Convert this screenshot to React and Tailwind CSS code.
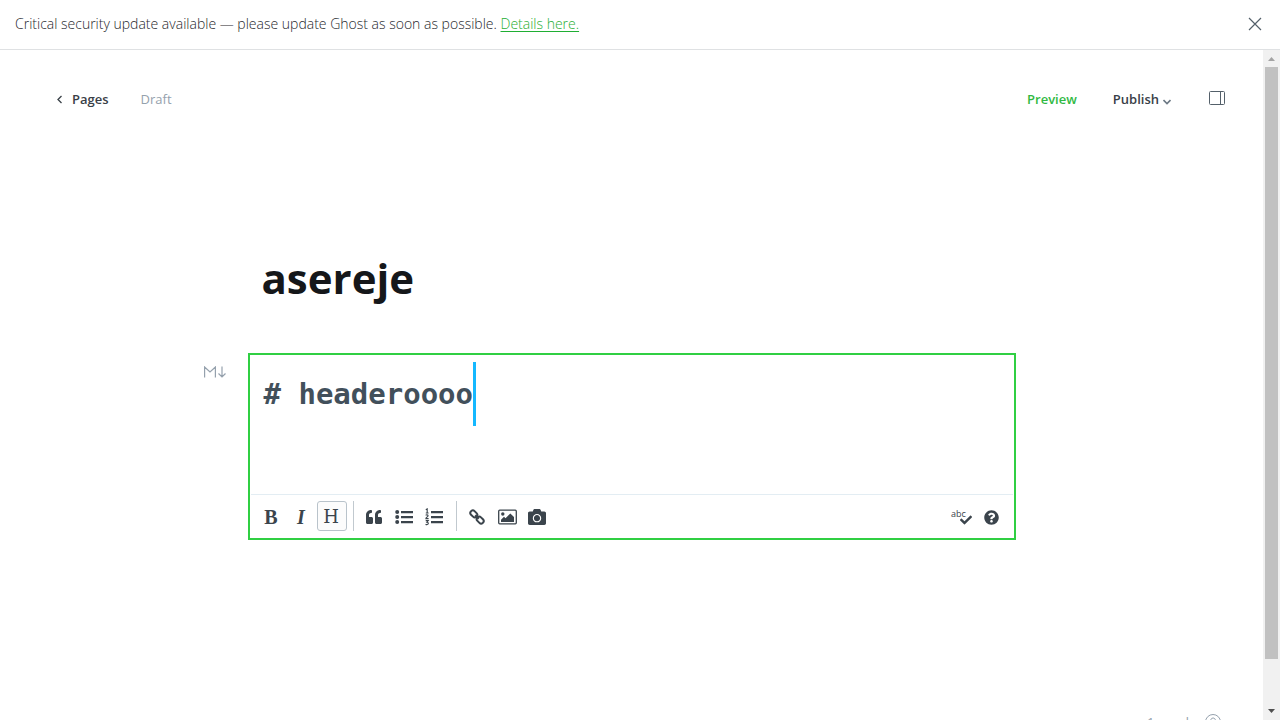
import { useState } from "react";
import { FaQuoteLeft, FaCamera, FaQuestionCircle, FaCheck } from "react-icons/fa";

function ToolButton({ label, active = false, children }) {
  return (
    <button
      type="button"
      aria-label={label}
      aria-pressed={active}
      className={
        "flex size-[30px] items-center justify-center rounded-[3px] border pt-0.5 pr-px text-[#3b444c] " +
        (active ? "border-[#b9c3cb] bg-[#fcfcfc]" : "border-transparent")
      }
    >
      {children}
    </button>
  );
}

function Divider() {
  return <span className="mx-1.5 h-[30px] w-px bg-[#c1c9cf]" />;
}

function ListIcon() {
  return (
    <svg viewBox="0 0 18 16" className="h-4 w-[18px]" fill="currentColor">
      <circle cx="2.2" cy="3" r="2" />
      <circle cx="2.2" cy="8" r="2" />
      <circle cx="2.2" cy="13" r="2" />
      <path d="M6 2h12v2.200H6zM6 7h12v2.200H6zM6 12h12v2.200H6z" />
    </svg>
  );
}

function NumberedListIcon() {
  return (
    <svg viewBox="0 0 18 18" className="size-[18px]" fill="currentColor">
      <path d="M6 3h12v2.200H6zM6 8h12v2.200H6zM6 13h12v2.200H6z" />
      <path
        d="M.8 1.800 2.200.9v4M.8 5h2.800M.7 7.300c.7-.8 2.400-.6 2.400.5C3.100 8.700 1 9.200.9 10.600h2.700M.7 12.600h2.500l-1.300 1.600c1 0 1.500.5 1.400 1.300-.1 1.200-1.800 1.400-2.700.7"
        fill="none"
        stroke="currentColor"
        strokeWidth="1.100"
      />
    </svg>
  );
}

function LinkIcon() {
  return (
    <svg viewBox="0 0 16 16" className="size-4" fill="none" stroke="currentColor" strokeWidth="2">
      <rect x="1" y="2.400" width="7.600" height="5" rx="2.400" transform="rotate(45 4.800 4.900)" />
      <rect x="7.400" y="8.600" width="7.600" height="5" rx="2.400" transform="rotate(45 11.200 11.100)" />
      <path d="M6.200 6.300l3.600 3.500" />
    </svg>
  );
}

function PictureIcon() {
  return (
    <svg viewBox="0 0 19 16" className="h-4 w-[19px]" fill="currentColor">
      <rect x=".7" y="1.200" width="17.600" height="13.600" rx="1" fill="none" stroke="currentColor" strokeWidth="1.300" />
      <circle cx="4.800" cy="5" r="1.700" />
      <path d="M3 13v-2.300l3-3 1.500 1.500L12.300 4.400 16 8v5z" />
    </svg>
  );
}

function Banner({ onClose }) {
  return (
    <aside className="flex h-[50px] shrink-0 items-center justify-between border-b border-[#dfe1e3] pb-0.5 pl-[15px] pr-[18px] text-sm font-light text-[#1f282e]">
      <p>
        Critical security update available — please update Ghost as soon as possible.{" "}
        <a href="#details" className="text-[#1fae33] underline underline-offset-2">
          Details here.
        </a>
      </p>
      <button type="button" aria-label="Close notification" onClick={onClose} className="text-[#54606a]">
        <svg viewBox="0 0 14 14" className="size-3.5" fill="none" stroke="currentColor" strokeWidth="1.200">
          <path d="M1 1l12 12M13 1L1 13" />
        </svg>
      </button>
    </aside>
  );
}

function EditorHeader() {
  return (
    <header className="flex h-[98px] shrink-0 items-center justify-between pl-14 pr-[38px] pt-0.5 text-[13px]">
      <div className="flex items-center gap-8">
        <a href="#pages" className="flex items-center gap-2 font-semibold text-[#394047]">
          <svg viewBox="0 0 8 10" className="h-2.5 w-2" fill="none" stroke="currentColor" strokeWidth="1.300">
            <path d="M5.500 1L2 4.500 5.500 8" />
          </svg>
          Pages
        </a>
        <span className="text-[#95a1ad]">Draft</span>
      </div>
      <div className="flex items-center">
        <button type="button" className="font-semibold text-[#30b943]">
          Preview
        </button>
        <button type="button" className="ml-9 flex items-center gap-1 font-semibold text-[#394047]">
          Publish
          <svg viewBox="0 0 8 6" className="mt-1 h-1.5 w-2" fill="none" stroke="#6b7884" strokeWidth="1.600">
            <path d="M.5 1L4 4.500 7.500 1" />
          </svg>
        </button>
        <button type="button" aria-label="Settings" className="ml-[38px] pb-1 text-[#54606a]">
          <svg viewBox="0 0 16 14" className="h-3.5 w-4" fill="none" stroke="currentColor">
            <rect x=".5" y=".5" width="15" height="13" rx="1" />
            <path d="M11.500.5v13" />
          </svg>
        </button>
      </div>
    </header>
  );
}

function MarkdownCard() {
  return (
    <section className="relative -mx-3.5 border-2 border-[#30cf43]">
      <svg
        viewBox="0 0 22 12"
        role="img"
        aria-label="Markdown"
        className="absolute -left-[46px] top-[11px] h-3 w-[22px]"
        fill="none"
        stroke="#95a1ad"
        strokeWidth="1.200"
      >
        <path d="M.6 11.500V1l5.400 5 5.400-5v10.500M18 .5v10.500M14.500 7.500L18 11l3.500-3.500" />
      </svg>
      <div className="flex h-[139px] items-start px-3.5 pt-[7px] font-['DejaVu_Sans_Mono',monospace] text-[29px] font-bold leading-[64px] text-[#42505b]">
        <p># headeroooo</p>
        <span className="h-16 w-[3px] bg-[#14b8ff]" />
      </div>
      <div className="mx-px flex items-center border-t border-[#e3edf3] px-1.5 pt-1.5 pb-[7px]">
        <ToolButton label="Bold">
          <span className="font-['Liberation_Serif',serif] text-xl font-bold leading-none">B</span>
        </ToolButton>
        <ToolButton label="Italic">
          <span className="font-['Liberation_Serif',serif] text-xl font-bold italic leading-none">I</span>
        </ToolButton>
        <ToolButton label="Heading" active>
          <span className="font-['DejaVu_Serif',serif] text-lg leading-none">H</span>
        </ToolButton>
        <Divider />
        <ToolButton label="Quote">
          <FaQuoteLeft className="size-4" />
        </ToolButton>
        <ToolButton label="Bulleted list">
          <ListIcon />
        </ToolButton>
        <ToolButton label="Numbered list">
          <NumberedListIcon />
        </ToolButton>
        <Divider />
        <ToolButton label="Link">
          <LinkIcon />
        </ToolButton>
        <ToolButton label="Image">
          <PictureIcon />
        </ToolButton>
        <ToolButton label="Upload photo">
          <FaCamera className="size-[18px]" />
        </ToolButton>
        <div className="ml-auto flex">
          <ToolButton label="Spellcheck">
            <span className="relative h-[17px] w-5 text-left text-[9px] leading-none">
              abc
              <FaCheck className="absolute -right-px bottom-0 size-3" />
            </span>
          </ToolButton>
          <ToolButton label="Help">
            <FaQuestionCircle className="size-[15px]" />
          </ToolButton>
        </div>
      </div>
    </section>
  );
}

function Scrollbar() {
  return (
    <div aria-hidden="true" className="flex w-[17px] shrink-0 flex-col items-center bg-[#f1f1f1]">
      <svg viewBox="0 0 17 17" className="size-[17px]" fill="#a3a3a3">
        <path d="M5 11h7L8.500 7z" />
      </svg>
      <div className="w-[13px] grow bg-[#c1c1c1]" />
      <div className="h-11 shrink-0" />
      <svg viewBox="0 0 17 17" className="size-[17px] shrink-0" fill="#505050">
        <path d="M5 6h7l-3.500 4z" />
      </svg>
    </div>
  );
}

export default function App() {
  const [showBanner, setShowBanner] = useState(true);
  return (
    <div className="flex h-screen flex-col overflow-hidden bg-white font-['Open_Sans','Noto_Sans',sans-serif]">
      {showBanner && <Banner onClose={() => setShowBanner(false)} />}
      <div className="flex min-h-0 grow">
        <div className="relative flex min-w-0 grow flex-col overflow-hidden">
          <EditorHeader />
          <main className="mx-auto w-full max-w-[740px] pt-[98px]">
            <h1 className="mb-[43px] text-[42px] font-bold leading-[64px] text-[#15171a]">asereje</h1>
            <MarkdownCard />
          </main>
          <footer className="absolute -bottom-3 right-[42px] flex items-center gap-4 text-[13px] leading-5 text-[#95a1ad]">
            <span>1 word</span>
            <a href="#help" aria-label="Help">
              <svg viewBox="0 0 16 16" className="size-4" fill="none" stroke="currentColor">
                <circle cx="8" cy="8" r="7.500" />
                <path d="M5.800 6.200c0-3 4.500-2.800 4.500-.2 0 1.600-2.300 1.500-2.300 3.500M8 11v1.300" />
              </svg>
            </a>
          </footer>
        </div>
        <Scrollbar />
      </div>
    </div>
  );
}
